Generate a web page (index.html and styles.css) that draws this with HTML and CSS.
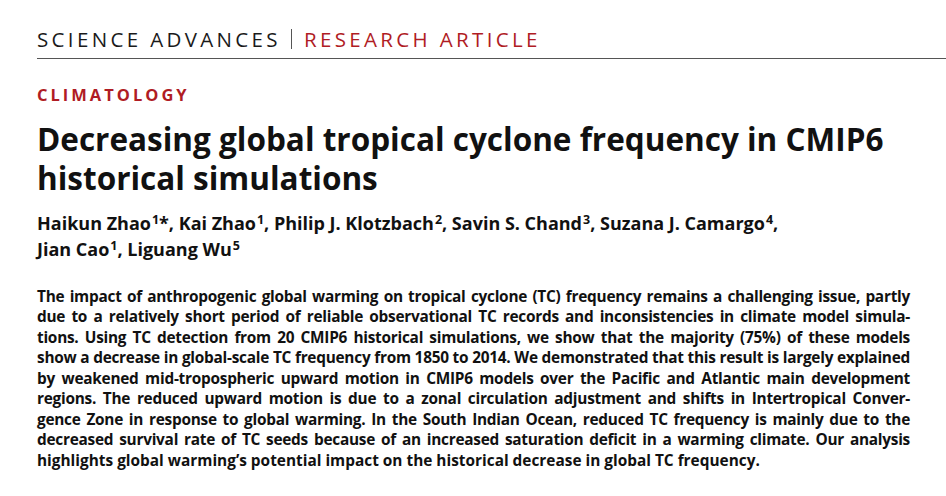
FILE: index.html
```html
<!DOCTYPE html>
<html lang="en">
<head>
<meta charset="utf-8">
<title>Decreasing global tropical cyclone frequency in CMIP6 historical simulations</title>
<link rel="stylesheet" href="styles.css">
</head>
<body>
<div class="page">
  <header class="masthead">
    <span class="journal">SCIENCE ADVANCES</span>
    <span class="sep"></span>
    <span class="kind">RESEARCH ARTICLE</span>
  </header>
  <div class="section">CLIMATOLOGY</div>
  <h1 class="title">Decreasing global tropical cyclone frequency in CMIP6 historical simulations</h1>
  <p class="authors">Haikun Zhao<span class="sup">1</span>*, Kai Zhao<span class="sup">1</span>, Philip J. Klotzbach<span class="sup">2</span>, Savin S. Chand<span class="sup">3</span>, Suzana J. Camargo<span class="sup">4</span>,<br>Jian Cao<span class="sup">1</span>, Liguang Wu<span class="sup">5</span></p>
  <p class="abstract">
    <span class="ln">The impact of anthropogenic global warming on tropical cyclone (TC) frequency remains a challenging issue, partly</span>
    <span class="ln">due to a relatively short period of reliable observational TC records and inconsistencies in climate model simula-</span>
    <span class="ln">tions. Using TC detection from 20 CMIP6 historical simulations, we show that the majority (75%) of these models</span>
    <span class="ln">show a decrease in global-scale TC frequency from 1850 to 2014. We demonstrated that this result is largely explained</span>
    <span class="ln">by weakened mid-tropospheric upward motion in CMIP6 models over the Pacific and Atlantic main development</span>
    <span class="ln">regions. The reduced upward motion is due to a zonal circulation adjustment and shifts in Intertropical Conver-</span>
    <span class="ln">gence Zone in response to global warming. In the South Indian Ocean, reduced TC frequency is mainly due to the</span>
    <span class="ln">decreased survival rate of TC seeds because of an increased saturation deficit in a warming climate. Our analysis</span>
    <span class="ln last">highlights global warming’s potential impact on the historical decrease in global TC frequency.</span>
  </p>
</div>
</body>
</html>
```

FILE: styles.css
```css
html, body {
  margin: 0;
  padding: 0;
  background: #ffffff;
}

body {
  font-family: "Open Sans", "Noto Sans", sans-serif;
  color: #111111;
}

.page {
  padding-left: 37px;
}

.masthead {
  display: flex;
  align-items: center;
  padding: 26.5px 0 7.5px 0;
  border-bottom: 1.5px solid #555555;
  font-size: 20.5px;
  line-height: 24px;
  font-weight: 400;
  letter-spacing: 3.35px;
}

.journal {
  color: #1a1a1a;
}

.sep {
  width: 1px;
  height: 20px;
  background: #555555;
  margin: 0 12px 0 10px;
}

.kind {
  color: #b01c24;
}

.section {
  margin-top: 26px;
  font-size: 16.5px;
  line-height: 20px;
  font-weight: 700;
  letter-spacing: 3px;
  color: #b01c24;
}

.title {
  margin: 14px 0 0 0;
  font-size: 31.5px;
  line-height: 39px;
  font-weight: 700;
  color: #111111;
  width: 880px;
}

.authors {
  margin: 14px 0 0 0;
  font-size: 18px;
  line-height: 25.5px;
  font-weight: 700;
}

.sup {
  font-size: 12.5px;
  line-height: 0;
  vertical-align: 6px;
  margin-left: 1px;
}

.abstract {
  margin: 24.5px 0 0 0;
  width: 873px;
  font-size: 15.4px;
  line-height: 20.5px;
  font-weight: 700;
  letter-spacing: -0.26px;
}

.ln {
  display: block;
  white-space: nowrap;
  text-align: justify;
  text-align-last: justify;
}

.ln.last {
  text-align-last: left;
  letter-spacing: 0;
}
```
